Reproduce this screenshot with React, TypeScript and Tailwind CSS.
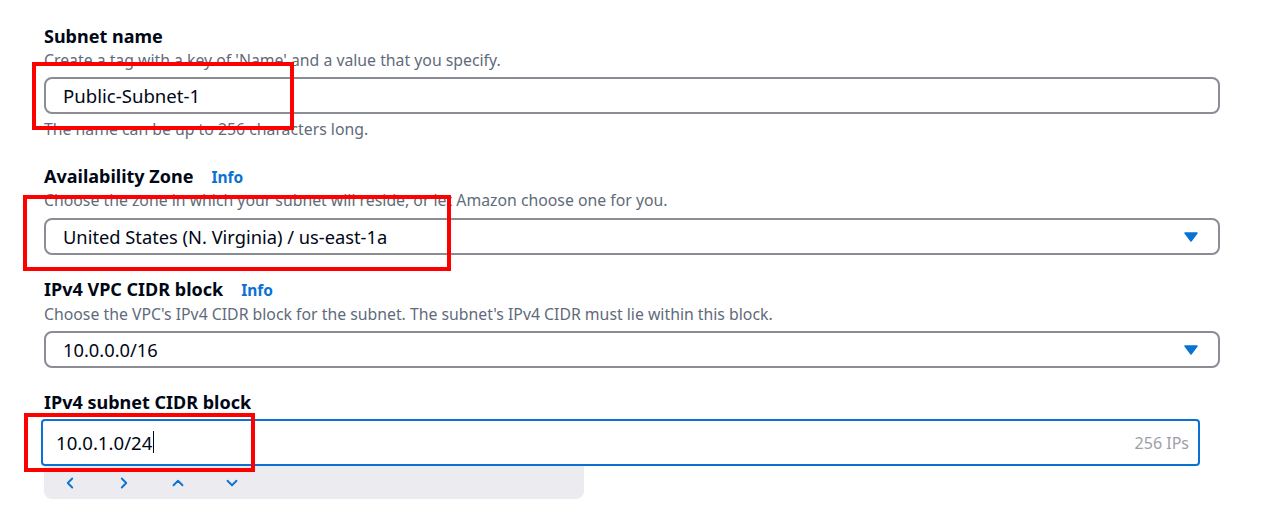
import React from "react";
import { ChevronLeft, ChevronRight, ChevronUp, ChevronDown } from "lucide-react";

const font = { fontFamily: '"Noto Sans", "Open Sans", Arial, sans-serif' };

function Caret() {
  return (
    <svg width="14" height="10" viewBox="0 0 14 10" className="shrink-0">
      <polygon points="1,1 13,1 7,9" fill="#0972d3" stroke="#0972d3" strokeWidth="1.5" strokeLinejoin="round" />
    </svg>
  );
}

function Label({ text, info }: { text: string; info?: boolean }) {
  return (
    <div className="flex items-baseline h-[24px] leading-[24px]">
      <span className="text-[18px] font-bold text-[#000716]">{text}</span>
      {info && <span className="ml-[18px] text-[15.5px] font-bold text-[#0972d3]">Info</span>}
    </div>
  );
}

function Desc({ text }: { text: string }) {
  return <div className="h-[22px] leading-[22px] text-[15.8px] text-[#5f6b7a] whitespace-nowrap">{text}</div>;
}

function SelectBox({ value }: { value: string }) {
  return (
    <div className="h-[37px] w-full border-2 border-[#8c8c94] rounded-[8px] flex items-center justify-between pl-[17px] pr-[20px]">
      <span className="text-[18.3px] text-[#000716]">{value}</span>
      <Caret />
    </div>
  );
}

export default function App() {
  return (
    <div className="relative w-[1288px] h-[516px] bg-white overflow-hidden" style={font}>
      <div className="flex flex-col pl-[44px] pr-[68px] pt-[24px]">
        <Label text="Subnet name" />
        <div className="mt-[1px]">
          <Desc text="Create a tag with a key of 'Name' and a value that you specify." />
        </div>
        <div className="mt-[6px] h-[37px] w-full border-2 border-[#8c8c94] rounded-[8px] flex items-center pl-[17px]">
          <span className="text-[18.6px] text-[#000716]">Public-Subnet-1</span>
        </div>
        <div className="mt-[4px]">
          <Desc text="The name can be up to 256 characters long." />
        </div>

        <div className="mt-[24px]">
          <Label text="Availability Zone" info />
        </div>
        <div className="mt-[1px]">
          <Desc text="Choose the zone in which your subnet will reside, or let Amazon choose one for you." />
        </div>
        <div className="mt-[7px]">
          <SelectBox value="United States (N. Virginia) / us-east-1a" />
        </div>

        <div className="mt-[22px]">
          <Label text="IPv4 VPC CIDR block" info />
        </div>
        <div className="mt-[2px]">
          <Desc text="Choose the VPC's IPv4 CIDR block for the subnet. The subnet's IPv4 CIDR must lie within this block." />
        </div>
        <div className="mt-[6px]">
          <SelectBox value="10.0.0.0/16" />
        </div>

        <div className="mt-[22px]">
          <Label text="IPv4 subnet CIDR block" />
        </div>
        <div className="mt-[5px] ml-[-3px] mr-[20px] h-[47px] border-2 border-[#0972d3] rounded-[4px] flex items-center justify-between pl-[13px] pr-[9px]">
          <span className="flex items-center text-[18.6px] text-[#000716]">
            10.0.1.0/24
            <span className="ml-[1px] inline-block w-px h-[22px] bg-[#000716]" />
          </span>
          <span className="text-[16px] text-[#9ba0a8]">256 IPs</span>
        </div>
        <div className="w-[540px] h-[33px] bg-[#ebebf0] rounded-b-[8px] flex items-center pl-[17px] gap-[36px] text-[#0972d3]">
          <ChevronLeft size={18} strokeWidth={2.4} />
          <ChevronRight size={18} strokeWidth={2.4} />
          <ChevronUp size={18} strokeWidth={2.4} />
          <ChevronDown size={18} strokeWidth={2.4} />
        </div>
      </div>

      <div className="absolute left-[32px] top-[62px] w-[262px] h-[68px] border-[4px] border-[#ff0000]" />
      <div className="absolute left-[23px] top-[195px] w-[428px] h-[76px] border-[4px] border-[#ff0000]" />
      <div className="absolute left-[24px] top-[413px] w-[231px] h-[59px] border-[4px] border-[#ff0000]" />
    </div>
  );
}
